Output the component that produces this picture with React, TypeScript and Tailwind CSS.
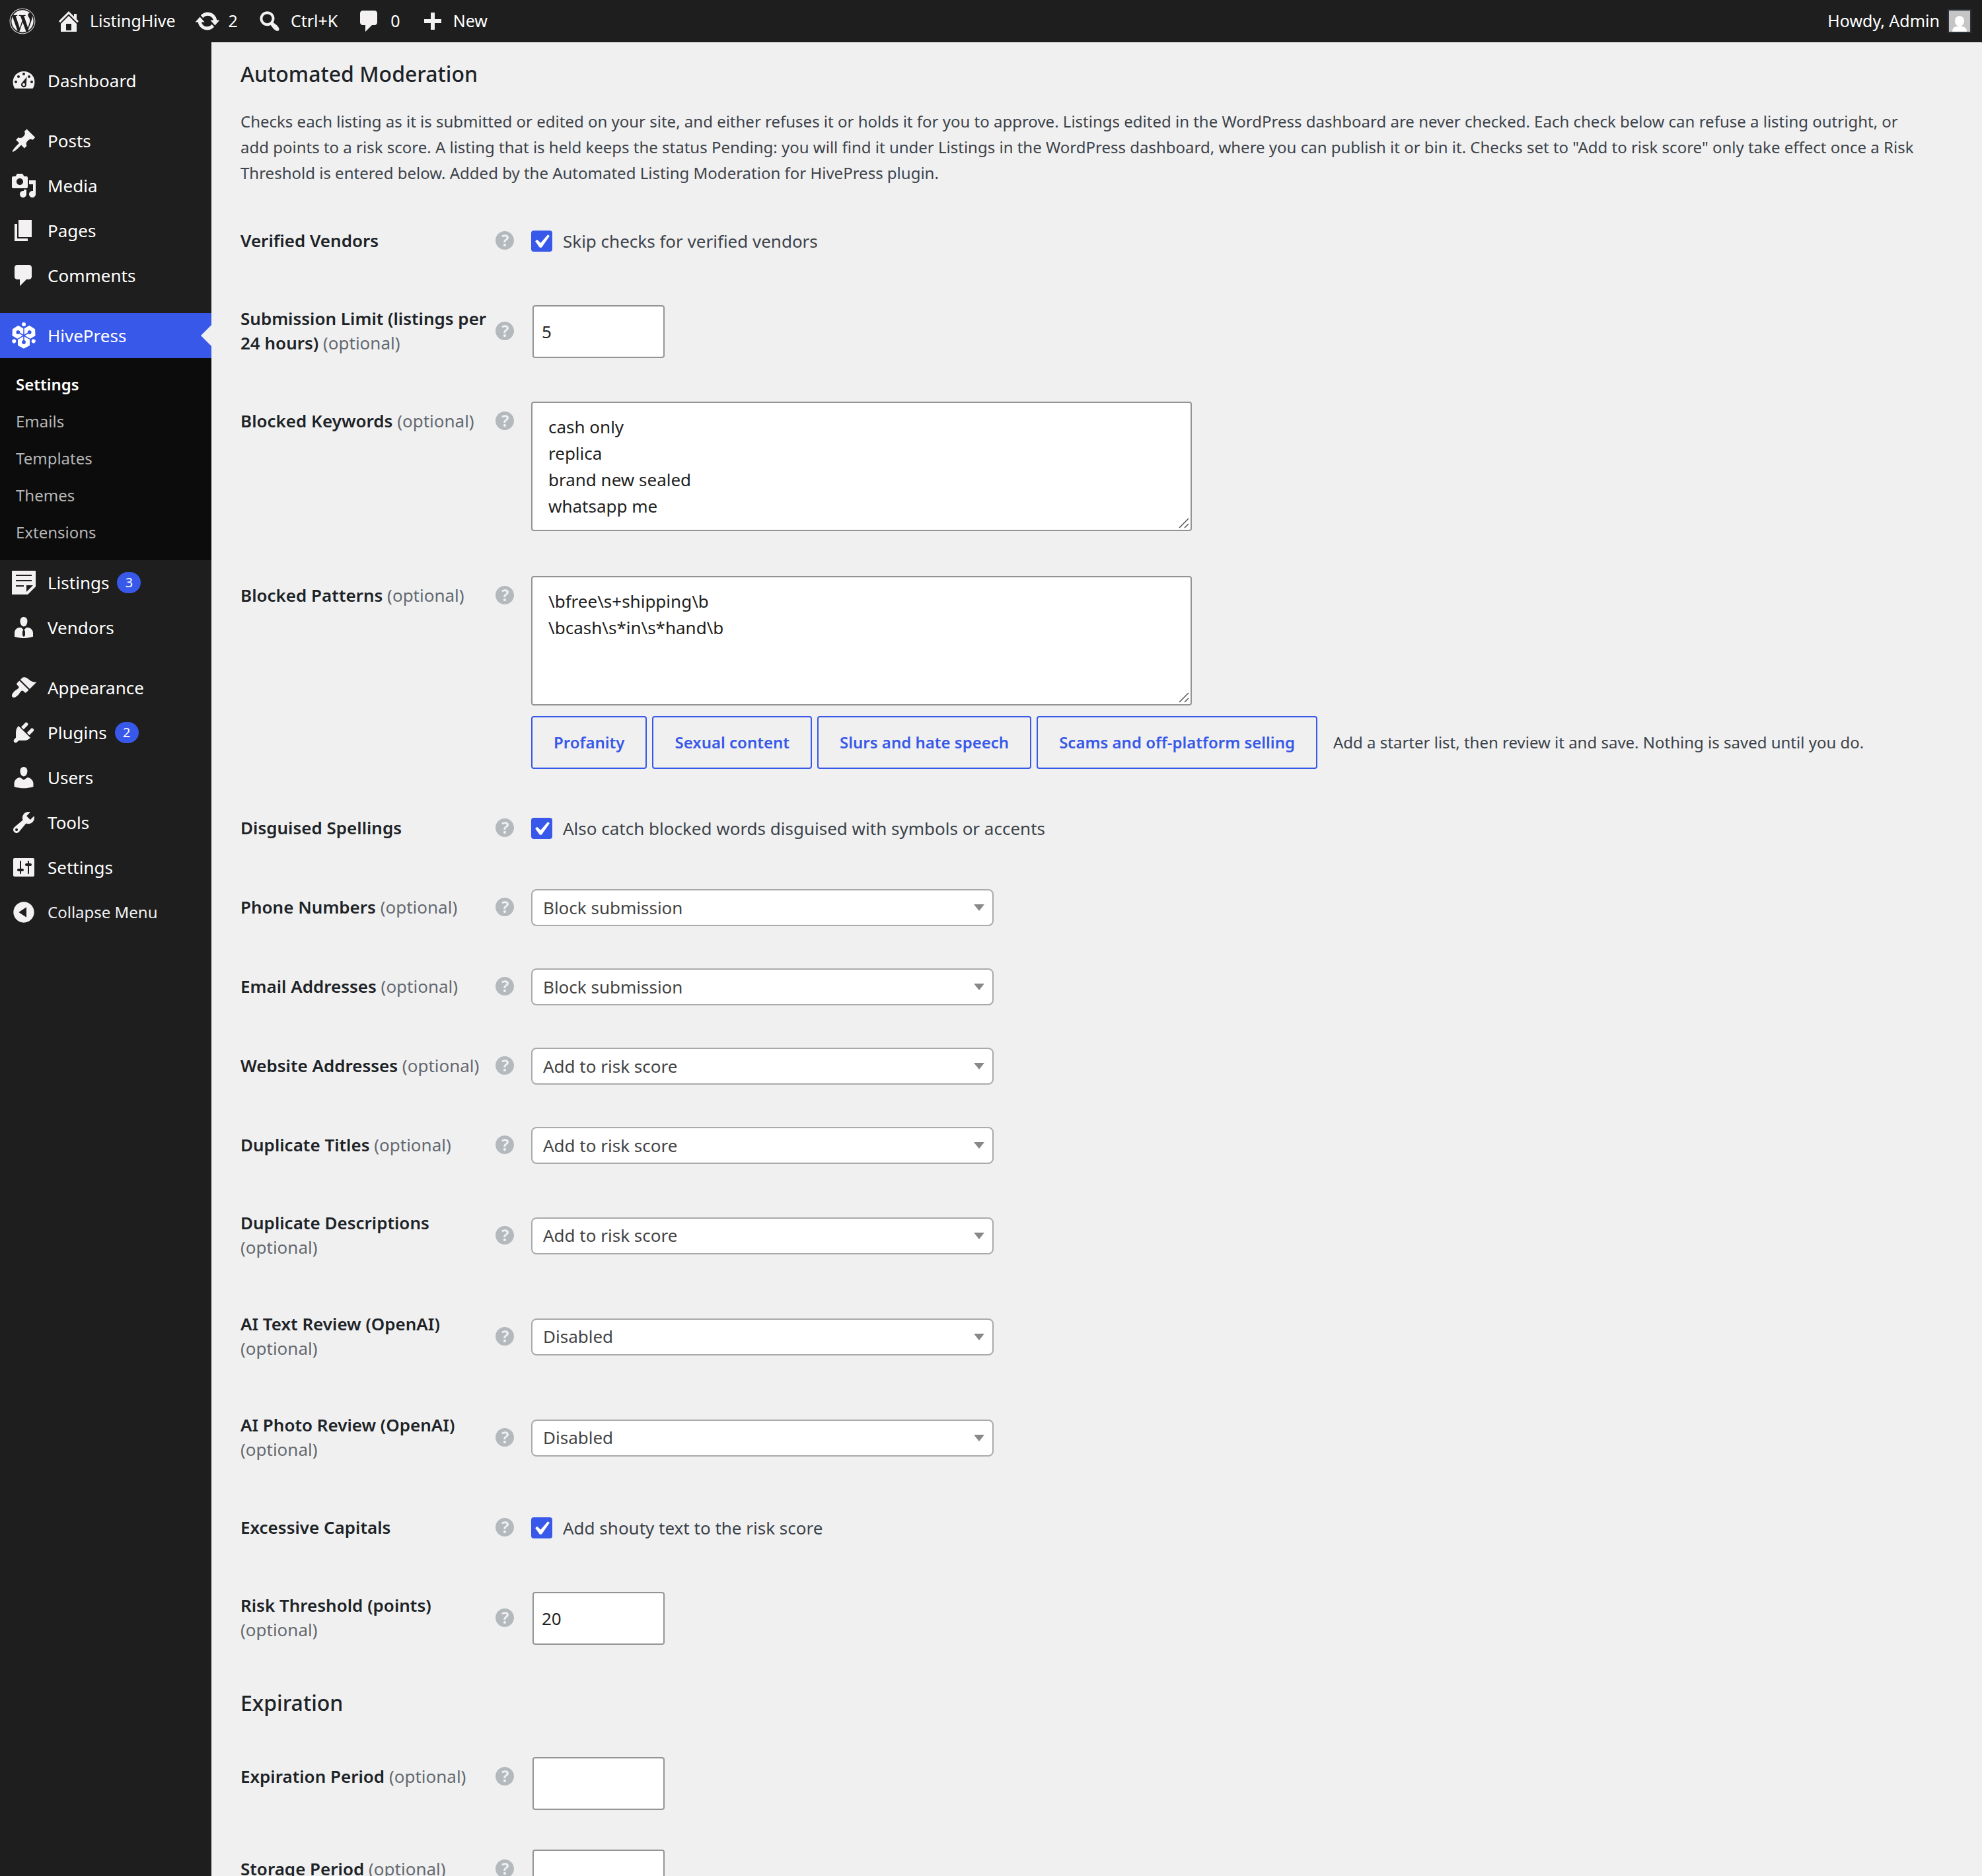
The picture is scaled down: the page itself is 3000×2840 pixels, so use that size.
import { useState } from "react";
import { FaWordpress } from "react-icons/fa";

const icons = {
  post: "M10.44 3.02l1.82-1.82 6.36 6.35-1.83 1.82c-1.05-.68-2.48-.57-3.41.36l-.75.75c-.92.93-1.04 2.35-.35 3.41l-1.83 1.82-2.41-2.41-2.8 2.79c-.42.42-3.38 2.71-3.8 2.29s1.86-3.39 2.28-3.81l2.79-2.79L4.1 9.36l1.83-1.82c1.05.69 2.48.57 3.4-.36l.75-.75c.93-.92 1.05-2.35.36-3.41z",
  media: "M13 11V4c0-.55-.45-1-1-1h-1.67L9 1H5L3.67 3H2c-.55 0-1 .45-1 1v7c0 .55.45 1 1 1h10c.55 0 1-.45 1-1zM7 4.5c1.38 0 2.5 1.12 2.5 2.5S8.38 9.5 7 9.5 4.5 8.38 4.5 7 5.62 4.5 7 4.5zM14 6h5v10.5c0 1.38-1.12 2.5-2.5 2.5S14 17.88 14 16.5s1.12-2.5 2.5-2.5c.17 0 .34.02.5.05V9h-3V6zm-4 8.05V13h2v3.5c0 1.38-1.12 2.5-2.5 2.5S7 17.88 7 16.5 8.12 14 9.5 14c.17 0 .34.02.5.05z",
  page: "M6 15V2h10v13H6zm-1 1h8v2H3V5h2v11z",
  comment: "M5 2h9c1.1 0 2 .9 2 2v7c0 1.1-.9 2-2 2h-2l-5 5v-5H5c-1.1 0-2-.9-2-2V4c0-1.1.9-2 2-2z",
  aside: "M1 1h18v12l-6 6H1V1zm3 3v1h12V4H4zm0 4v1h12V8H4zm6 5v-1H4v1h6zm2 4l5-5h-5v5z",
  vendor: "M7.3 6l-.03-.19c-.04-.37-.05-.73-.03-1.08.02-.36.1-.71.25-1.04.14-.32.31-.61.52-.86s.49-.46.83-.6c.34-.15.72-.23 1.13-.23.69 0 1.26.2 1.71.59s.76.87.91 1.44.18 1.16.09 1.78l-.03.19c-.01.09-.05.25-.11.48-.05.24-.12.47-.2.69-.08.21-.19.45-.34.72-.14.27-.3.49-.47.69-.18.19-.4.34-.67.48-.27.13-.55.19-.86.19s-.59-.06-.87-.19c-.26-.13-.49-.29-.67-.5-.18-.2-.34-.42-.49-.66-.15-.25-.26-.49-.34-.73-.09-.25-.16-.47-.21-.67-.06-.21-.1-.37-.12-.5zm9.2 6.24c.41.7.5 1.41.5 2.14v2.49c0 .03-.12.08-.29.13-.18.04-.42.13-.97.27-.55.12-1.1.24-1.65.34s-1.19.19-1.95.27c-.75.08-1.46.12-2.13.12-.68 0-1.39-.04-2.14-.12-.75-.07-1.4-.17-1.98-.27-.58-.11-1.08-.23-1.56-.34-.49-.11-.8-.21-1.06-.29L3 16.87v-2.49c0-.75.07-1.46.46-2.15s.81-1.25 1.5-1.68C5.66 10.12 7.19 10 8 10l1.67 1.67L9 13v3l1.02 1.08L11 16v-3l-.68-1.33L11.97 10c.77 0 2.2.07 2.9.52.71.45 1.21 1.02 1.63 1.72z",
  appearance: "M14.48 11.06L7.41 3.99l1.5-1.5c.5-.56 2.3-.47 3.51.32 1.21.8 1.43 1.28 2.91 2.1 1.18.64 2.45 1.26 4.45.85zm-.71.71L6.7 4.7 4.93 6.47c-.39.39-.39 1.02 0 1.41l1.06 1.06c.39.39.39 1.03 0 1.42-.6.6-1.43 1.11-2.21 1.69-.35.26-.7.53-1.01.84C1.43 14.23.4 16.08 1.4 17.07c.99 1 2.84-.03 4.18-1.36.31-.31.58-.66.85-1.02.57-.78 1.08-1.61 1.69-2.21.39-.39 1.02-.39 1.41 0l1.06 1.06c.39.39 1.02.39 1.41 0z",
  plugin: "M13.11 4.36L9.87 7.6 8 5.73l3.24-3.24c.35-.34 1.05-.2 1.56.32.52.51.66 1.21.31 1.55zm-8 1.77l.91-1.12 9.01 9.01-1.19.84c-.71.71-2.63 1.16-3.82 1.16H6.14L4.9 17.26c-.59.59-1.54.59-2.12 0-.59-.58-.59-1.53 0-2.12l1.24-1.24v-3.88c0-1.13.4-3.19 1.09-3.89zm7.26 3.97l3.24-3.24c.34-.35 1.04-.21 1.55.31.52.51.66 1.21.31 1.55l-3.24 3.25z",
  user: "M10 9.25c-2.27 0-2.73-3.44-2.73-3.44C7 4.02 7.82 2 9.97 2c2.16 0 2.98 2.02 2.71 3.81 0 0-.41 3.44-2.68 3.44zm0 2.57L12.72 10c2.39 0 4.52 2.33 4.52 4.53v2.49s-3.65 1.13-7.24 1.13c-3.65 0-7.24-1.13-7.24-1.13v-2.49c0-2.25 1.94-4.48 4.47-4.48z",
  tools: "M16.68 9.77c-1.34 1.34-3.3 1.67-4.95.99l-5.41 6.52c-.99.99-2.59.99-3.58 0s-.99-2.59 0-3.57l6.52-5.42c-.68-1.65-.35-3.61.99-4.95 1.28-1.28 3.12-1.62 4.72-1.06l-2.89 2.89 2.82 2.82 2.86-2.87c.53 1.58.18 3.39-1.08 4.65zM3.81 16.21c.4.39 1.04.39 1.43 0 .4-.4.4-1.04 0-1.43-.39-.4-1.03-.4-1.43 0-.39.39-.39 1.03 0 1.43z",
  settings: "M18 16V4c0-.55-.45-1-1-1H3c-.55 0-1 .45-1 1v12c0 .55.45 1 1 1h14c.55 0 1-.45 1-1zM8 11h1c.55 0 1 .45 1 1s-.45 1-1 1H8v1.5c0 .28-.22.5-.5.5s-.5-.22-.5-.5V13H6c-.55 0-1-.45-1-1s.45-1 1-1h1V5.5c0-.28.22-.5.5-.5s.5.22.5.5V11zm5-2h-1c-.55 0-1-.45-1-1s.45-1 1-1h1V5.5c0-.28.22-.5.5-.5s.5.22.5.5V7h1c.55 0 1 .45 1 1s-.45 1-1 1h-1v5.5c0 .28-.22.5-.5.5s-.5-.22-.5-.5V9z",
  collapse: "M10 2.16c4.33 0 7.84 3.51 7.84 7.84s-3.51 7.84-7.84 7.84S2.16 14.33 2.16 10 5.71 2.16 10 2.16zm2 11.72V6.12L6.18 9.97z",
  home: "M16 8.5l1.53 1.53-1.06 1.06L10 4.6l-6.47 6.49-1.06-1.06L10 2.5l4 4v-2h2v4zm-6-2.46l6 5.99V18H4v-5.97zM12 17v-5H8v5h4z",
  update: "M10.2 3.28c3.53 0 6.43 2.61 6.92 6h2.08l-3.5 4-3.5-4h2.32c-.45-1.97-2.21-3.45-4.32-3.45-1.45 0-2.73.71-3.54 1.78L4.95 5.66C6.23 4.2 8.11 3.28 10.2 3.28zm-.4 13.44c-3.52 0-6.43-2.61-6.92-6H.8l3.5-4c1.17 1.33 2.33 2.67 3.5 4H5.48c.45 1.97 2.21 3.45 4.32 3.45 1.45 0 2.73-.71 3.54-1.78l1.71 1.95c-1.28 1.46-3.15 2.38-5.25 2.38z",
  search: "M12.14 4.18c1.87 1.87 2.11 4.75.72 6.89.12.1.22.21.36.31.2.16.47.36.81.59.34.24.56.39.66.47.42.31.73.57.94.78.32.32.6.65.84 1 .25.35.44.69.59 1.04.14.35.21.68.18 1-.02.32-.14.59-.36.81s-.49.34-.81.36c-.31.02-.65-.04-.99-.19-.35-.14-.7-.34-1.04-.59-.35-.24-.68-.52-1-.84-.21-.21-.47-.52-.77-.93-.1-.13-.25-.35-.47-.66-.22-.32-.4-.57-.56-.78-.16-.2-.29-.35-.44-.5-2.07 1.09-4.69.76-6.44-.98-2.14-2.15-2.14-5.64 0-7.78 2.15-2.15 5.63-2.15 7.78 0zm-1.41 6.36c1.36-1.37 1.36-3.58 0-4.95-1.37-1.37-3.59-1.37-4.95 0-1.37 1.37-1.37 3.58 0 4.95 1.36 1.37 3.58 1.37 4.95 0z",
  plus: "M17 8.5v3h-5v5H9v-5H4v-3h5v-5h3v5h5z",
  help: "M17 10c0-3.87-3.14-7-7-7-3.87 0-7 3.13-7 7s3.13 7 7 7c3.86 0 7-3.13 7-7zm-6.3 1.48H9.14v-.43c0-.38.08-.7.24-.98s.46-.57.88-.89c.41-.29.68-.53.81-.71.14-.18.2-.39.2-.62 0-.25-.09-.44-.28-.58-.19-.13-.45-.19-.79-.19-.58 0-1.25.19-2 .57l-.64-1.28c.87-.49 1.8-.74 2.77-.74.81 0 1.45.2 1.92.58.48.39.71.91.71 1.55 0 .43-.09.8-.29 1.11-.19.32-.57.67-1.11 1.06-.38.28-.61.49-.71.63-.1.15-.15.34-.15.57v.35zm-1.47 2.74c-.18-.17-.27-.42-.27-.73 0-.33.08-.58.26-.75s.43-.25.77-.25c.32 0 .57.09.75.26s.27.42.27.74c0 .3-.09.55-.27.72-.18.18-.43.27-.75.27-.33 0-.58-.09-.76-.26z",
  check: "M14.83 4.89l1.34.94-5.81 8.38H9.02L5.78 9.67l1.34-1.25 2.57 2.4z",
};

type IconName = keyof typeof icons;

const actions = ["Disabled", "Add to risk score", "Block submission"];

export default function App(){
  return <div className="flex min-h-screen flex-col bg-[#f0f0f0] font-['Noto_Sans','Open_Sans',sans-serif] text-[24px] text-[#3c434a]">
    <TopBar/>
    <div className="flex flex-1 items-stretch">
      <Sidebar/>
      <main className="min-w-0 flex-1 pl-11 pr-10 pt-[26px]">
        <Heading>Automated Moderation</Heading>
        <p className="mt-[30px] mb-6 max-w-[2550px] leading-[39px]">Checks each listing as it is submitted or edited on your site, and either refuses it or holds it for you to approve. Listings edited in the WordPress dashboard are never checked. Each check below can refuse a listing outright, or add points to a risk score. A listing that is held keeps the status Pending: you will find it under Listings in the WordPress dashboard, where you can publish it or bin it. Checks set to "Add to risk score" only take effect once a Risk Threshold is entered below. Added by the Automated Listing Moderation for HivePress plugin.</p>
        <Row id="verified" label="Verified Vendors"><Check id="verified" text="Skip checks for verified vendors"/></Row>
        <Row id="limit" label="Submission Limit (listings per 24 hours)" optional><NumberBox id="limit" value="5"/></Row>
        <Row id="keywords" label="Blocked Keywords" optional>
          <div className="pb-2"><TextBox id="keywords" value={"cash only\nreplica\nbrand new sealed\nwhatsapp me"}/></div>
        </Row>
        <Row id="patterns" label="Blocked Patterns" optional>
          <TextBox id="patterns" value={"\\bfree\\s+shipping\\b\n\\bcash\\s*in\\s*hand\\b"}/>
          <div className="mt-4 flex flex-wrap items-center gap-2">
            <StarterButton>Profanity</StarterButton>
            <StarterButton>Sexual content</StarterButton>
            <StarterButton>Slurs and hate speech</StarterButton>
            <StarterButton>Scams and off-platform selling</StarterButton>
            <span className="ml-4">Add a starter list, then review it and save. Nothing is saved until you do.</span>
          </div>
        </Row>
        <Row id="disguised" label="Disguised Spellings"><Check id="disguised" text="Also catch blocked words disguised with symbols or accents"/></Row>
        <Row id="phone" label="Phone Numbers" optional><Select id="phone" value="Block submission"/></Row>
        <Row id="email" label="Email Addresses" optional><Select id="email" value="Block submission"/></Row>
        <Row id="website" label="Website Addresses" optional><Select id="website" value="Add to risk score"/></Row>
        <Row id="titles" label="Duplicate Titles" optional><Select id="titles" value="Add to risk score"/></Row>
        <Row id="descriptions" label="Duplicate Descriptions" optional><Select id="descriptions" value="Add to risk score"/></Row>
        <Row id="ai-text" label="AI Text Review (OpenAI)" optional><Select id="ai-text" value="Disabled"/></Row>
        <Row id="ai-photo" label="AI Photo Review (OpenAI)" optional><Select id="ai-photo" value="Disabled"/></Row>
        <Row id="capitals" label="Excessive Capitals"><Check id="capitals" text="Add shouty text to the risk score"/></Row>
        <Row id="threshold" label="Risk Threshold (points)" optional><NumberBox id="threshold" value="20"/></Row>
        <div className="py-[30px]"><Heading>Expiration</Heading></div>
        <Row id="expiration" label="Expiration Period" optional><NumberBox id="expiration" value=""/></Row>
        <Row id="storage" label="Storage Period" optional><NumberBox id="storage" value=""/></Row>
      </main>
    </div>
  </div>
}

function TopBar(){
  return <header className="flex h-16 items-center gap-7 bg-[#1e1e1e] pl-3.5 pr-4 text-[25px] text-white">
    <a href="#about" aria-label="About WordPress" className="pr-0.5"><FaWordpress className="size-10 text-[#f3f1f1]"/></a>
    <BarItem icon="home">ListingHive</BarItem>
    <BarItem icon="update">2</BarItem>
    <BarItem icon="search">Ctrl+K</BarItem>
    <BarItem icon="comment">0</BarItem>
    <BarItem icon="plus">New</BarItem>
    <a href="#profile" className="ml-auto flex items-center gap-3">
      Howdy, Admin
      <svg viewBox="0 0 36 36" className="size-9"><path fill="#2c3338" d="M0 0h36v36H0z"/><path fill="#c5c5c5" d="M2 2h32v32H2z"/><ellipse cx="18" cy="18" rx="7" ry="8" fill="#fff"/><path fill="#fff" d="M7 34c0-5 3-8 8-8h6c5 0 8 3 8 8z"/></svg>
    </a>
  </header>
}

function Sidebar(){
  return <nav className="w-80 shrink-0 bg-[#1e1e1e] pt-6 text-[26px] text-white">
    <MenuItem icon={<DashboardIcon/>}>Dashboard</MenuItem>
    <div className="h-[23px]"/>
    <MenuItem icon={<Icon name="post"/>}>Posts</MenuItem>
    <MenuItem icon={<Icon name="media"/>}>Media</MenuItem>
    <MenuItem icon={<Icon name="page"/>}>Pages</MenuItem>
    <MenuItem icon={<Icon name="comment"/>}>Comments</MenuItem>
    <div className="h-[23px]"/>
    <MenuItem icon={<HiveIcon/>} current>HivePress</MenuItem>
    <div className="flex flex-col bg-[#0c0c0c] pt-3 pb-3.5 text-[24px] leading-[56px] text-[#b6b6b6]">
      <a href="#settings" className="pl-6 font-semibold text-white">Settings</a>
      <a href="#emails" className="pl-6">Emails</a>
      <a href="#templates" className="pl-6">Templates</a>
      <a href="#themes" className="pl-6">Themes</a>
      <a href="#extensions" className="pl-6">Extensions</a>
    </div>
    <MenuItem icon={<Icon name="aside"/>} count={3}>Listings</MenuItem>
    <MenuItem icon={<Icon name="vendor"/>}>Vendors</MenuItem>
    <div className="h-[23px]"/>
    <MenuItem icon={<Icon name="appearance"/>}>Appearance</MenuItem>
    <MenuItem icon={<Icon name="plugin"/>} count={2}>Plugins</MenuItem>
    <MenuItem icon={<Icon name="user"/>}>Users</MenuItem>
    <MenuItem icon={<Icon name="tools"/>}>Tools</MenuItem>
    <MenuItem icon={<Icon name="settings"/>}>Settings</MenuItem>
    <button className="flex h-[68px] w-full items-center text-[24px] text-[#f0f0f0]">
      <span className="flex w-18 justify-center"><Icon name="collapse"/></span>Collapse Menu
    </button>
  </nav>
}

function MenuItem({icon,children,count,current}:any){
  return <a href="#menu" className={`relative flex h-[68px] items-center ${current?"bg-[#3858e9]":""}`}>
    <span className="flex w-18 justify-center">{icon}</span>
    {children}
    {count && <span className="ml-3 flex h-8 w-9 items-center justify-center rounded-full bg-[#3858e9] text-[20px]">{count}</span>}
    {current && <svg viewBox="0 0 16 32" className="absolute right-0 top-[18px] h-8 w-4"><path d="M16 0v32L0 16z" fill="#f0f0f0"/></svg>}
  </a>
}

function BarItem({icon,children}:{icon:IconName,children:any}){
  return <a href="#bar" className="flex items-center gap-3"><Icon name={icon}/>{children}</a>
}

function Icon({name,className="size-10 text-[#f3f1f1]"}:{name:IconName,className?:string}){
  return <svg viewBox="0 0 20 20" fill="currentColor" fillRule="evenodd" className={className} aria-hidden="true"><path d={icons[name]}/></svg>
}

function DashboardIcon(){
  return <svg viewBox="0 0 20 20" className="size-10" aria-hidden="true">
    <path fill="#f3f1f1" d="M3.2 16h13.6c1-1.500 1.400-3.200 1.400-5C18.200 6.400 14.600 3 10 3S1.800 6.400 1.800 11c0 1.800.4 3.500 1.400 5z"/>
    <g fill="#1e1e1e">
      <circle cx="10" cy="5" r="1"/><circle cx="6" cy="7" r="1"/><circle cx="14" cy="7" r="1"/><circle cx="4" cy="11" r="1"/><circle cx="16" cy="11" r="1"/>
      <path d="M12.300 7.200l-.4 5.400a2 2 0 1 1-3.600-.6z"/>
    </g>
    <circle cx="10" cy="13" r="1" fill="#f3f1f1"/>
  </svg>
}

// three petals turned round the centre, with a dot between each pair
function HiveIcon(){
  return <svg viewBox="-20 -20 40 40" className="size-10" aria-hidden="true">
    {[0,120,240].map(a=><g key={a} transform={`rotate(${a})`}>
      <path d="M0 1l9 5v9l-9 4.700L-9 15V6z" fill="#fff"/>
      <path d="M0 0v10" stroke="#3858e9" strokeWidth="1.600"/>
      <circle cy="10" r="2.900" fill="#3858e9"/>
      <circle cy="-17" r="3" fill="#fff"/>
    </g>)}
  </svg>
}

function Heading({children}:any){return <h2 className="text-[32px] leading-[44px] font-medium text-[#1d2327]">{children}</h2>}

function Row({id,label,optional,children}:any){
  return <div className="grid min-h-[120px] grid-cols-[380px_60px_minmax(0,1fr)]">
    <div className="col-span-2 flex items-start pt-[39px] pb-10">
      <div className="flex w-full items-center">
        <label htmlFor={id} className="w-[380px] text-[26px] leading-[37px] font-semibold text-[#1d2327]">{label}{optional && <span className="font-normal text-[#646970]"> (optional)</span>}</label>
        <Icon name="help" className="size-10 text-[#b4b9be]"/>
      </div>
    </div>
    <div className="self-center py-[30px]">{children}</div>
  </div>
}

function Check({id,text}:any){
  const [on,setOn]=useState(true);
  return <label className="flex items-center gap-4 text-[26px]">
    <span className="relative size-8">
      <input id={id} type="checkbox" checked={on} onChange={e=>setOn(e.target.checked)} className="block size-8 appearance-none rounded-[4px] border-2 border-[#949494] bg-white checked:border-[#3858e9] checked:bg-[#3858e9]"/>
      {on && <Icon name="check" className="pointer-events-none absolute -left-1.5 -top-1 size-[42px] text-white"/>}
    </span>
    {text}
  </label>
}

function NumberBox({id,value}:any){
  return <input id={id} type="text" inputMode="numeric" defaultValue={value} className="ml-0.5 block h-20 w-[200px] rounded-[4px] border-2 border-[#949494] bg-white px-3 text-[26px] text-[#1e1e1e]"/>
}

function TextBox({id,value}:any){
  return <div className="relative w-[1000px] max-w-full">
    <textarea id={id} rows={4} defaultValue={value} className="block w-full resize-none rounded-[4px] border-2 border-[#949494] bg-white px-6 py-4 text-[26px] leading-10 text-[#1e1e1e]"/>
    <svg viewBox="0 0 16 16" className="pointer-events-none absolute bottom-1 right-1 size-4"><path d="M1 15L15 1M9 15l6-6" stroke="#555" strokeWidth="1.500"/></svg>
  </div>
}

function StarterButton({children}:any){return <button className="h-20 rounded-[4px] border-2 border-[#3858e9] px-8 font-semibold text-[#3858e9]">{children}</button>}

function Select({id,value}:any){
  return <div className="relative w-[700px] max-w-full">
    <select id={id} defaultValue={value} className="block h-14 w-full appearance-none rounded-[8px] border-2 border-[#aaa] bg-white px-4 text-[26px] text-[#444]">
      {actions.map(a=><option key={a}>{a}</option>)}
    </select>
    <svg viewBox="0 0 16 10" className="pointer-events-none absolute right-3.5 top-[23px] h-2.5 w-4"><path d="M0 0h16L8 10z" fill="#888"/></svg>
  </div>
}
